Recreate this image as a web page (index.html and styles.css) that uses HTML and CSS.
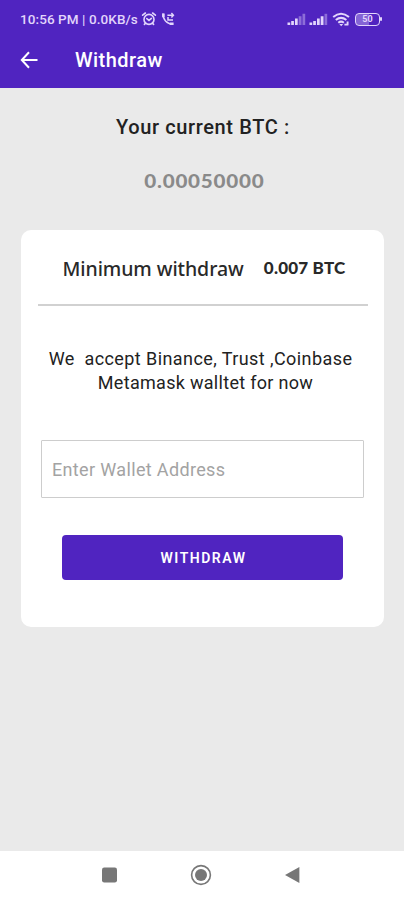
FILE: index.html
```html
<!DOCTYPE html>
<html lang="en">
<head>
<meta charset="utf-8">
<title>Withdraw</title>
<link rel="stylesheet" href="styles.css">
</head>
<body>
<div class="screen">
  <header class="top">
    <div class="status">
      <span class="status-text">10:56 PM | 0.0KB/s</span>
      <svg class="alarm" width="16" height="16" viewBox="0 0 16 16" fill="none" stroke="currentColor" stroke-width="1.6" stroke-linecap="round"><circle cx="8" cy="8.4" r="5"/><path d="M1.6 4.2 4.4 2M14.4 4.2 11.6 2M5.8 7.6 8 9.4 10.4 7.4M4.4 12.4l-1 1M11.6 12.4l1 1"/></svg>
      <svg class="call" width="14" height="14" viewBox="0 0 14 14" fill="none" stroke="currentColor"><path d="M2 1.6C1.8 7.5 5.5 11.8 12 12" stroke-width="1.4"/><path d="M2.4 1.4v3.8M8.6 11.7H12.6" stroke-width="2.6"/><path d="M6.4 3.2h5.8M10.4 1l2 2.2-2 2.2M7 5v3h5" stroke-width="1.5"/></svg>
      <div class="status-right">
        <svg width="19" height="13" viewBox="0 0 19 13" fill="currentColor"><path d="M.5 9.5h2.7V12H.5zM4.2 8h2.7v4H4.2zM8 5.5h2.7V12H8z"/><path opacity=".42" d="M11.7 3.3h2.8V12h-2.8zM15.5.8h2.7V12h-2.7z"/></svg>
        <svg width="19" height="13" viewBox="0 0 19 13" fill="currentColor"><path d="M.5 9.5h2.7V12H.5zM4.2 8h2.7v4H4.2zM8 5.5h2.7V12H8zM11.7 3.3h2.8V12h-2.8z"/><path opacity=".42" d="M15.5.8h2.7V12h-2.7z"/></svg>
        <svg class="wifi" width="19" height="15" viewBox="0 0 19 15" fill="none" stroke="currentColor" stroke-width="2"><path d="M1.2 5.1Q9 -1.5 17 5.1M3.8 8Q9 3.8 14.4 8M6.3 10.7Q9 8.5 11.9 10.7"/><path d="m7.3 12 1.9 2.2 2-2.2z" fill="currentColor" stroke="none"/><path d="M12.4 12.6h4M15.6 9.6v3.4" stroke-width="1.9"/></svg>
        <div class="battery"><span>50</span></div>
      </div>
    </div>
    <div class="appbar">
      <svg width="19" height="18" viewBox="0 0 19 18" fill="none" stroke="currentColor" stroke-width="2"><path d="M9 1.3 1.8 9 9 16.7M2 9h15.5"/></svg>
      <h1>Withdraw</h1>
    </div>
  </header>
  <main>
    <h2>Your current BTC :</h2>
    <p class="balance">0.00050000</p>
    <section class="card">
      <div class="minimum"><span class="min-label">Minimum withdraw</span><span class="min-value">0.007 BTC</span></div>
      <p class="accept"><span class="line-a">We &nbsp;accept Binance, Trust ,Coinbase</span><span class="line-b">Metamask walltet for now</span></p>
      <input type="text" placeholder="Enter Wallet Address">
      <button type="button">WITHDRAW</button>
    </section>
  </main>
  <nav>
    <svg width="200" height="24" viewBox="0 0 200 24" fill="#777"><rect x="1" y="4.5" width="15" height="15" rx="2.2"/><circle cx="100" cy="12" r="9.4" fill="none" stroke="#777" stroke-width="1.6"/><circle cx="100" cy="12" r="6"/><path d="M184 12 198.4 4v16z"/></svg>
  </nav>
</div>
</body>
</html>
```
FILE: styles.css
```css
* { box-sizing: border-box; }
body { margin: 0; font-family: Roboto, "Liberation Sans", sans-serif; }
h1, h2, p { margin: 0; white-space: nowrap; }
svg { display: block; flex: none; }
.screen { width: 404px; height: 900px; display: flex; flex-direction: column; background: #eaeaea; overflow: hidden; }
.top { height: 88px; background: #5024c0; color: #fff; flex: none; }
.status { height: 38px; padding: 0 22px 0 20px; display: flex; align-items: center; color: #e2d5fb; }
.status-text { width: 119px; font-size: 13.5px; font-weight: 500; letter-spacing: .08px; white-space: nowrap; }
.alarm { margin-left: 2px; }
.call { margin-left: 4px; }
.status-right { margin-left: auto; display: flex; align-items: center; gap: 3px; }
.wifi { margin-left: 1px; }
.battery { position: relative; width: 25px; height: 13px; margin: 0 2px 0 1px; border: 1.5px solid currentColor; border-radius: 4px; display: flex; align-items: center; justify-content: center; font-size: 9px; font-weight: 700; line-height: 9px; background: linear-gradient(90deg, #8463d5 55%, transparent 55%); }
.battery::after { content: ""; position: absolute; right: -3px; top: 3.5px; width: 2px; height: 4px; background: currentColor; border-radius: 1px; }
.appbar { height: 44px; padding-left: 20px; display: flex; align-items: center; gap: 36px; }
h1 { font-size: 20px; font-weight: 500; line-height: 24px; letter-spacing: .45px; }
main { flex: 1; display: flex; flex-direction: column; align-items: center; }
h2 { margin: 27px 0 0 2px; font-size: 20px; font-weight: 500; line-height: 24px; color: #222; letter-spacing: .63px; }
.balance { margin: 30px 0 0 4px; font-family: Lato, sans-serif; font-weight: 900; font-size: 19px; line-height: 24px; color: #8a8a8a; letter-spacing: .7px; transform: scaleX(1.085); }
.card { width: 363px; height: 397px; margin-top: 37px; padding: 0 16px 0 17px; background: #fff; border-radius: 10px; display: flex; flex-direction: column; align-items: center; }
.minimum { width: 330px; height: 76px; padding: 3px 22px 0 25px; border-bottom: 2px solid #d1d1d1; display: flex; align-items: center; justify-content: space-between; white-space: nowrap; color: #292929; }
.min-label { font-family: "Noto Sans", sans-serif; font-size: 19.5px; font-weight: 500; line-height: 24px; letter-spacing: -.08px; }
.min-value { margin-top: -3px; font-family: Lato, sans-serif; font-size: 17px; font-weight: 900; letter-spacing: .2px; }
.accept { margin-top: 41px; display: flex; flex-direction: column; align-items: center; font-size: 18px; line-height: 24px; color: #222; }
.line-a { margin-right: 4px; letter-spacing: .42px; }
.line-b { margin-left: 6px; letter-spacing: .3px; }
input { width: 323px; height: 58px; margin-top: 45px; padding: 0 10px; border: 1.5px solid #cdcdcd; border-radius: 1px; background: #fff; font: 400 18px Roboto, sans-serif; letter-spacing: .35px; }
input::placeholder { color: #a3a3a3; }
button { width: 281px; height: 45px; margin-top: 37px; padding: 0 0 0 2px; border: 0; border-radius: 4px; background: #5024c0; color: #fff; font: 600 14px Roboto, sans-serif; letter-spacing: 1.5px; }
nav { height: 49px; padding: 0 2px 2px 0; flex: none; background: #fff; display: flex; align-items: center; justify-content: center; }
```
